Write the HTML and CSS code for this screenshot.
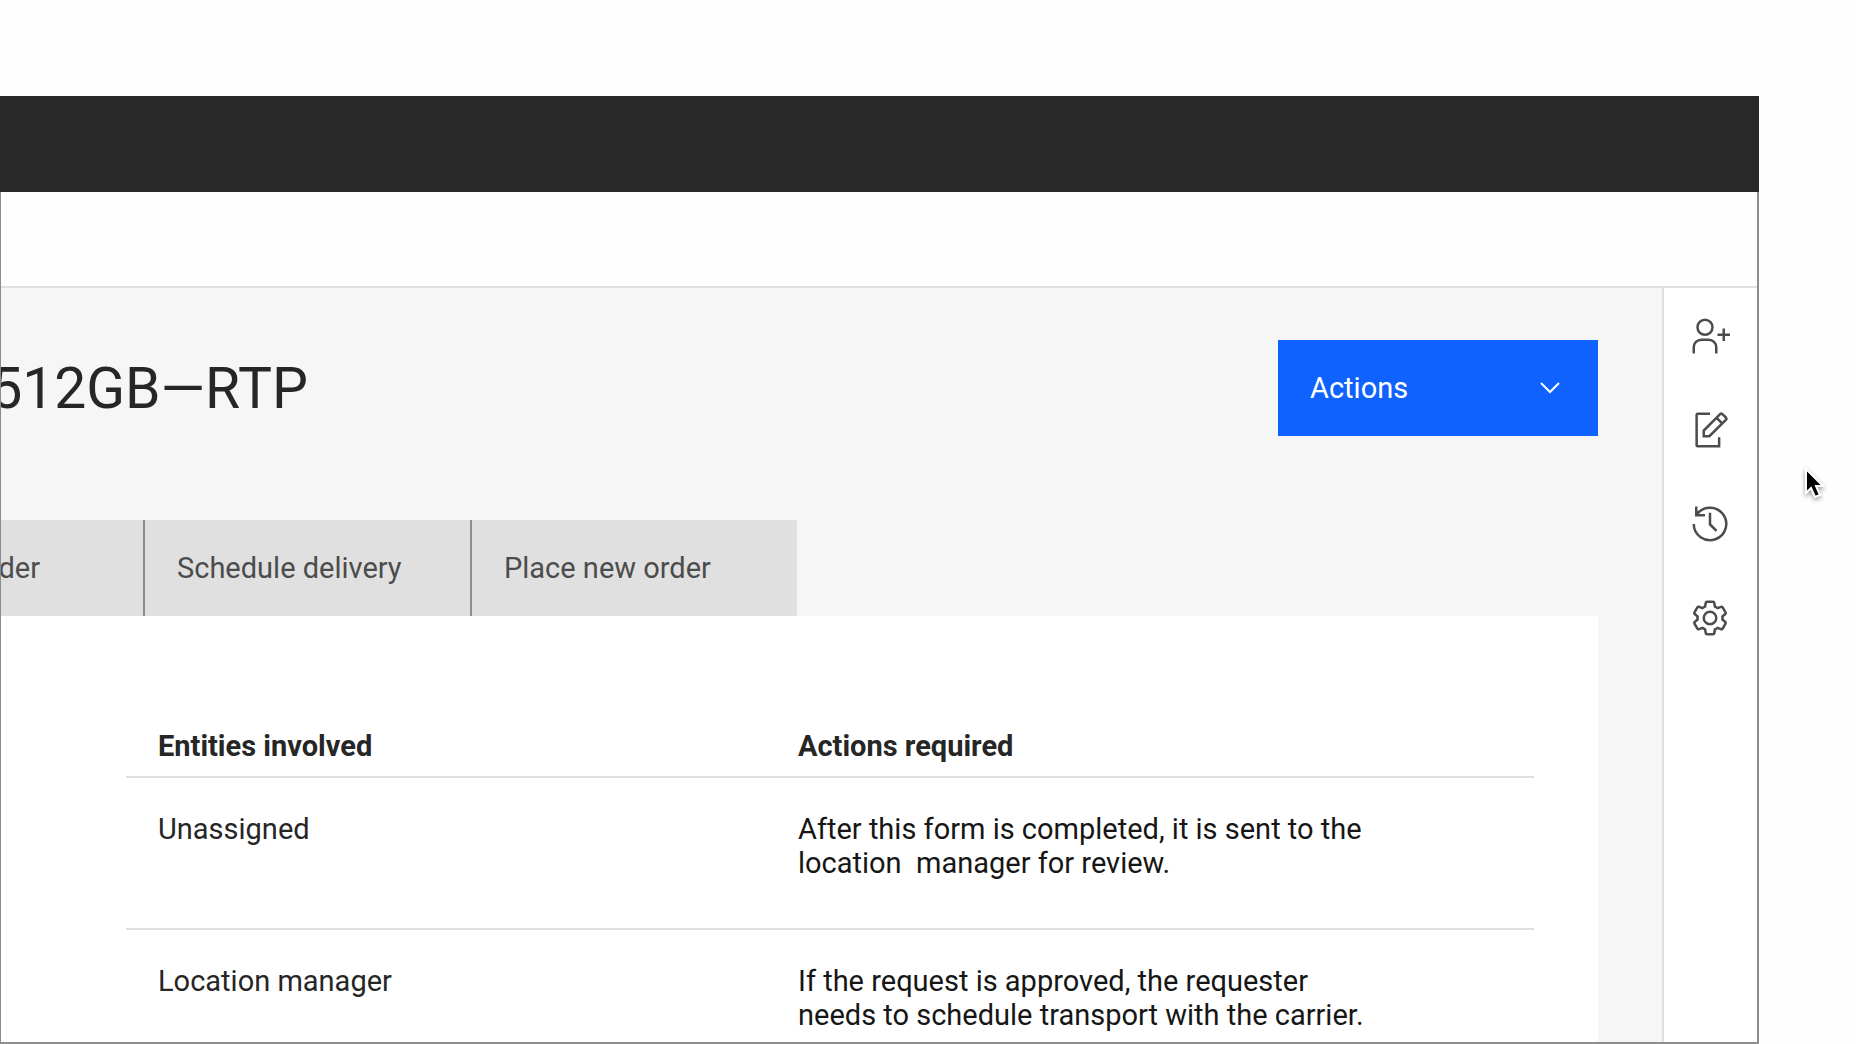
FILE: index.html
```html
<!DOCTYPE html>
<html lang="en">
<head>
<meta charset="utf-8">
<title>512GB—RTP</title>
<link rel="stylesheet" href="styles.css">
</head>
<body>
<div class="window">
  <header class="topbar"></header>
  <div class="frame">
    <div class="subbar"></div>
    <div class="body">
      <main class="content">
        <div class="heading">
          <div class="title-clip"><h1 class="title">512GB—RTP</h1></div>
          <button class="actions" type="button">
            Actions
            <svg class="chevron" viewBox="0 0 20 12" aria-hidden="true"><path d="M1 1l9 9 9-9"/></svg>
          </button>
        </div>
        <nav class="tabs">
          <button class="tab tab-clipped" type="button">der</button>
          <button class="tab" type="button">Schedule delivery</button>
          <button class="tab" type="button">Place new order</button>
        </nav>
        <section class="panel">
          <table class="steps">
            <thead>
              <tr><th scope="col">Entities involved</th><th scope="col">Actions required</th></tr>
            </thead>
            <tbody>
              <tr>
                <td>Unassigned</td>
                <td class="detail">After this form is completed, it is sent to the<br>location&nbsp; manager for review.</td>
              </tr>
              <tr>
                <td>Location manager</td>
                <td class="detail">If the request is approved, the requester<br>needs to schedule transport with the carrier.</td>
              </tr>
            </tbody>
          </table>
        </section>
      </main>
      <aside class="rail">
        <button class="rail-button" type="button" aria-label="Add user">
          <svg class="icon" viewBox="0 0 32 32"><path class="solid" d="M32 14h-4v-4h-2v4h-4v2h4v4h2v-4h4zM12 4a5 5 0 1 1-5 5 5 5 0 0 1 5-5m0-2a7 7 0 1 0 7 7 7 7 0 0 0-7-7zM22 30h-2v-5a5 5 0 0 0-5-5H9a5 5 0 0 0-5 5v5H2v-5a7 7 0 0 1 7-7h6a7 7 0 0 1 7 7z"/></svg>
        </button>
        <button class="rail-button" type="button" aria-label="Edit">
          <svg class="icon" viewBox="0 0 32 32"><path d="M16 3H6.300a1 1 0 0 0-1 1v24a1 1 0 0 0 1 1h17v-7.200M11 21v-4.600L24.300 3.100a1 1 0 0 1 1.400 0l3.200 3.100a1 1 0 0 1 0 1.400L15.500 21zM21.300 6.300l4.400 4.400"/></svg>
        </button>
        <button class="rail-button" type="button" aria-label="History">
          <svg class="icon" viewBox="0 0 32 32"><path d="M3 16A13 13 0 1 0 5 9M5 2v7h7M16 7v9.300l5.200 5.200"/></svg>
        </button>
        <button class="rail-button" type="button" aria-label="Settings">
          <svg class="icon" viewBox="0 0 32 32"><path class="solid" d="M27 16.760c0-.25 0-.5 0-.76s0-.51 0-.77l1.920-1.680A2 2 0 0 0 29.300 11L26.940 7a2 2 0 0 0-1.730-1 2 2 0 0 0-.64.1l-2.430.82a11.350 11.350 0 0 0-1.310-.75l-.51-2.520a2 2 0 0 0-2-1.610h-4.680a2 2 0 0 0-2 1.610l-.51 2.520a11.480 11.480 0 0 0-1.320.75l-2.380-.86A2 2 0 0 0 6.790 6a2 2 0 0 0-1.730 1L2.700 11a2 2 0 0 0 .41 2.510L5 15.240c0 .25 0 .5 0 .76s0 .51 0 .77l-1.890 1.680A2 2 0 0 0 2.700 21l2.360 4a2 2 0 0 0 1.730 1 2 2 0 0 0 .64-.1l2.430-.82a11.350 11.350 0 0 0 1.310.75l.51 2.520a2 2 0 0 0 2 1.610h4.720a2 2 0 0 0 2-1.610l.51-2.520a11.480 11.480 0 0 0 1.320-.75l2.420.82a2 2 0 0 0 .64.1 2 2 0 0 0 1.730-1l2.280-4a2 2 0 0 0-.41-2.510zM25.210 24l-3.430-1.160a8.860 8.860 0 0 1-2.710 1.570L18.360 28h-4.720l-.71-3.550a9.360 9.360 0 0 1-2.700-1.570L6.790 24l-2.360-4 2.720-2.400a8.900 8.900 0 0 1 0-3.130L4.430 12l2.360-4 3.430 1.160a8.860 8.860 0 0 1 2.710-1.570L13.640 4h4.720l.71 3.550a9.360 9.360 0 0 1 2.700 1.570L25.210 8l2.360 4-2.720 2.400a8.900 8.900 0 0 1 0 3.130L27.570 20z"/><circle cx="16" cy="16" r="5"/></svg>
        </button>
      </aside>
    </div>
  </div>
</div>
<svg class="cursor" viewBox="0 0 24 34" aria-hidden="true"><path d="M2 2v24l5-5 4 9 5-2-4-9h7z"/></svg>
</body>
</html>
```
FILE: styles.css
```css
* { box-sizing: border-box; }

body {
  position: relative;
  margin: 0;
  min-height: 100vh;
  padding: 96px 97px 0 0;
  background: #fefefe;
  color: #262626;
  font-family: Roboto, "Noto Sans", sans-serif;
  font-size: 29px;
  line-height: 34px;
}

button {
  font: inherit;
  border: 0;
  border-radius: 0;
  cursor: pointer;
}

.window {
  display: flex;
  flex-direction: column;
  min-height: calc(100vh - 96px);
}

.topbar {
  height: 96px;
  background: #282828;
}

.frame {
  flex: 1;
  display: flex;
  flex-direction: column;
  border: solid #8d8d8d;
  border-width: 0 2px 2px 1px;
}

.subbar {
  height: 96px;
  border-bottom: 2px solid #e0e0e0;
}

.body {
  flex: 1;
  display: flex;
}

.content {
  flex: 1;
  min-width: 0;
  display: flex;
  flex-direction: column;
  padding-right: 64px;
  background: #f6f6f6;
}

.heading {
  display: flex;
  justify-content: space-between;
  padding: 52px 0 84px;
}

.title-clip {
  display: flex;
  justify-content: flex-end;
  align-items: center;
  width: 307px;
  padding-top: 2px;
  overflow: hidden;
}

.title {
  margin: 0;
  font-size: 57px;
  font-weight: 400;
  line-height: 64px;
  white-space: nowrap;
}

.actions {
  display: flex;
  justify-content: space-between;
  align-items: center;
  width: 320px;
  height: 96px;
  padding: 0 38px 0 32px;
  background: #0f62fe;
  color: #fff;
}

.chevron {
  width: 20px;
  height: 12px;
  fill: none;
  stroke: currentColor;
  stroke-width: 2;
}

.tabs {
  display: flex;
}

.tab {
  width: 327px;
  height: 96px;
  padding: 0 32px;
  border-left: 2px solid #8d8d8d;
  background: #e0e0e0;
  color: #4c4c4c;
  text-align: left;
}

.tab-clipped {
  display: flex;
  justify-content: flex-end;
  align-items: center;
  width: 142px;
  padding: 0 103px 0 0;
  border-left: 0;
  overflow: hidden;
}

.panel {
  flex: 1;
  padding: 100px 64px 0 125px;
  background: #fff;
}

.steps {
  width: 100%;
  table-layout: fixed;
  border-collapse: separate;
  border-spacing: 0;
}

.steps th,
.steps td {
  padding: 0 0 0 32px;
  text-align: left;
  vertical-align: top;
}

.steps th:first-child { width: 640px; }

.steps th {
  padding-top: 13px;
  padding-bottom: 13px;
  border-bottom: 2px solid #e0e0e0;
  font-weight: 700;
}

.steps td {
  padding-top: 34px;
}

.steps tbody tr:not(:last-child) td {
  padding-bottom: 48px;
  border-bottom: 2px solid #e0e0e0;
}

.steps .detail { color: #161616; }

.rail {
  display: flex;
  flex-direction: column;
  align-items: flex-start;
  gap: 54px;
  width: 95px;
  padding: 28px 0 0 26px;
  border-left: 2px solid #e0e0e0;
  background: #fff;
}

.rail-button {
  display: flex;
  padding: 0;
  background: none;
  color: #4c4c4c;
}

.icon {
  width: 40px;
  height: 40px;
  fill: none;
  stroke: currentColor;
  stroke-width: 2;
}

.icon .solid {
  fill: currentColor;
  stroke: none;
}

.cursor {
  position: absolute;
  top: 467px;
  right: 28px;
  width: 24px;
  height: 34px;
  fill: #000;
  stroke: #fff;
  stroke-width: 2;
  filter: drop-shadow(0 2px 2px rgba(0, 0, 0, 0.4));
}
```
